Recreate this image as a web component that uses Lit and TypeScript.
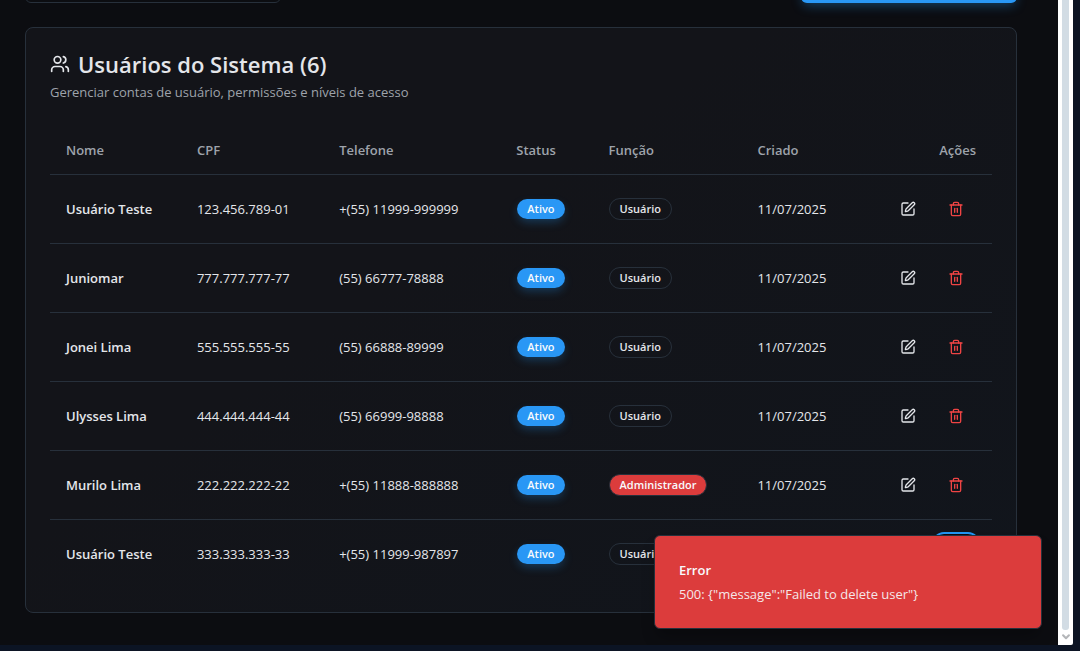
import { LitElement, html, css, svg } from "lit";
import { customElement, property, state } from "lit/decorators.js";
import { classMap } from "lit/directives/class-map.js";

interface User {
  name: string;
  cpf: string;
  phone: string;
  admin?: boolean;
  created: string;
}

const USERS: User[] = [
  { name: "Usuário Teste", cpf: "123.456.789-01", phone: "+(55) 11999-999999", created: "11/07/2025" },
  { name: "Juniomar", cpf: "777.777.777-77", phone: "(55) 66777-78888", created: "11/07/2025" },
  { name: "Jonei Lima", cpf: "555.555.555-55", phone: "(55) 66888-89999", created: "11/07/2025" },
  { name: "Ulysses Lima", cpf: "444.444.444-44", phone: "(55) 66999-98888", created: "11/07/2025" },
  { name: "Murilo Lima", cpf: "222.222.222-22", phone: "+(55) 11888-888888", admin: true, created: "11/07/2025" },
  { name: "Usuário Teste", cpf: "333.333.333-33", phone: "+(55) 11999-987897", created: "11/07/2025" },
];

const ICONS = {
  users: svg`<path d="M16 21v-2a4 4 0 0 0-4-4H6a4 4 0 0 0-4 4v2"/><circle cx="9" cy="7" r="4"/><path d="M22 21v-2a4 4 0 0 0-3-3.87"/><path d="M16 3.13a4 4 0 0 1 0 7.75"/>`,
  edit: svg`<path d="M12 3H5a2 2 0 0 0-2 2v14a2 2 0 0 0 2 2h14a2 2 0 0 0 2-2v-7"/><path d="M18.375 2.625a1 1 0 0 1 3 3l-9.013 9.014a2 2 0 0 1-.853.505l-2.873.84a.5.5 0 0 1-.62-.62l.84-2.873a2 2 0 0 1 .506-.852z"/>`,
  trash: svg`<path d="M3 6h18"/><path d="M19 6v14c0 1-1 2-2 2H7c-1 0-2-1-2-2V6"/><path d="M8 6V4c0-1 1-2 2-2h4c1 0 2 1 2 2v2"/><path d="M10 11v6"/><path d="M14 11v6"/>`,
  down: svg`<path d="m5 8 7 7 7-7"/>`,
};

const icon = (name: keyof typeof ICONS, size: number, width = 2) => html`
  <svg width=${size} height=${size} viewBox="0 0 24 24" fill="none" stroke="currentColor"
    stroke-width=${width} stroke-linecap="round" stroke-linejoin="round" aria-hidden="true">${ICONS[name]}</svg>`;

@customElement("user-table")
export class UserTable extends LitElement {
  static styles = css`
    :host { display: block; }
    table { width: 100%; border-collapse: separate; border-spacing: 0; table-layout: fixed; }
    .c-name { width: 13.9%; }
    .c-cpf { width: 15.1%; }
    .c-phone { width: 18.8%; }
    .c-status { width: 9.8%; }
    .c-role { width: 15.8%; }
    th {
      height: 48px; padding: 0 16px; text-align: left; font-weight: 600;
      color: #9ea3ab; border-bottom: 1px solid #27303b;
    }
    td { padding: 16px; white-space: nowrap; border-bottom: 1px solid #27303b; }
    tbody tr:last-child td { border-bottom: 0; }
    .name { font-weight: 600; }
    .right { text-align: right; }
    .badge {
      display: inline-flex; padding: 2px 10px; border: 1px solid #27303b; border-radius: 11px;
      font-size: 11px; line-height: 16px; font-weight: 600; vertical-align: middle;
    }
    .active {
      background: #2997f5; border-color: transparent; background-clip: padding-box; color: #f8fafc;
      box-shadow: 0 4px 10px -2px rgba(33, 150, 243, 0.3);
    }
    .admin { background: #dc3c3c; color: #f8fafc; }
    .actions { display: flex; justify-content: flex-end; gap: 8px; }
    button {
      display: inline-flex; align-items: center; justify-content: center; width: 40px; height: 36px;
      padding: 0; border: 0; border-radius: 8px; background: transparent; color: #e4e6ea; cursor: pointer;
    }
    .delete { color: #ef4444; }
    .ring { box-shadow: 0 0 0 2px #0c0d11, 0 0 0 4px #2196f3; }
  `;

  @property({ attribute: false }) users: User[] = [];
  @state() private selected = 5;

  render() {
    return html`
      <table>
        <colgroup>
          <col class="c-name" /><col class="c-cpf" /><col class="c-phone" />
          <col class="c-status" /><col class="c-role" /><col /><col />
        </colgroup>
        <thead>
          <tr>
            <th>Nome</th><th>CPF</th><th>Telefone</th><th>Status</th><th>Função</th><th>Criado</th>
            <th class="right">Ações</th>
          </tr>
        </thead>
        <tbody>
          ${this.users.map((u, i) => html`
            <tr>
              <td class="name">${u.name}</td>
              <td>${u.cpf}</td>
              <td>${u.phone}</td>
              <td><span class="badge active">Ativo</span></td>
              <td><span class=${classMap({ badge: true, admin: !!u.admin })}>${u.admin ? "Administrador" : "Usuário"}</span></td>
              <td>${u.created}</td>
              <td>
                <div class="actions">
                  <button type="button" aria-label="Editar">${icon("edit", 16)}</button>
                  <button type="button" aria-label="Excluir"
                    class=${classMap({ delete: true, ring: i === this.selected })}
                    @click=${() => (this.selected = i)}>${icon("trash", 16)}</button>
                </div>
              </td>
            </tr>`)}
        </tbody>
      </table>`;
  }
}

@customElement("app-root")
export class AppRoot extends LitElement {
  static styles = css`
    * { box-sizing: border-box; }
    :host {
      display: flex; box-sizing: border-box; height: 100vh; padding: 0 7px 6px 0; background: #0c1424;
      color: #e4e6ea; font: 13px/20px "Open Sans", "Noto Sans", sans-serif;
    }
    /* The page is scrolled to its end, so content is anchored to the bottom edge. */
    main {
      position: relative; flex: 1; min-width: 0; display: flex; flex-direction: column;
      justify-content: flex-end; gap: 24px; overflow: hidden; padding: 0 41px 32px 25px;
      background: #0c0d11;
    }
    .toolbar { display: flex; justify-content: space-between; flex: none; }
    .search {
      width: 256px; height: 40px; padding: 0 12px; border: 1px solid #27303b; border-radius: 6px;
      background: #0c0d11; color: inherit; font: inherit;
    }
    .add {
      width: 216px; height: 40px; border: 0; border-radius: 6px; background: #2997f5; color: #f8fafc;
      font: inherit; font-weight: 600; box-shadow: 0 4px 12px -2px rgba(33, 150, 243, 0.4);
    }
    .card {
      flex: none; padding: 24px; border: 1px solid #27303b; border-radius: 8px;
      background: linear-gradient(145deg, #131419 40%, #11151c);
    }
    .header { display: flex; flex-direction: column; gap: 6px; margin-bottom: 24px; }
    h2 {
      display: flex; align-items: center; gap: 8px; margin: 0;
      font-size: 22px; line-height: 24px; font-weight: 600;
    }
    p { margin: 0; }
    .muted { color: #9ea3ab; }
    .toast {
      position: absolute; right: 16px; bottom: 16px; width: 388px; max-width: 100%;
      display: flex; flex-direction: column; gap: 4px; padding: 24px;
      border: 1px solid #27303b; border-radius: 6px; background: #dc3c3c; color: #f8fafc;
      box-shadow: 0 10px 15px -3px rgba(0, 0, 0, 0.3);
    }
    .title { font-weight: 600; }
    .message { opacity: 0.9; }
    .scrollbar {
      width: 15px; display: flex; flex-direction: column; align-items: center; gap: 2px;
      padding-bottom: 3px; background: #fff; color: #b4b6b9; border-bottom-right-radius: 2px;
    }
    .thumb { flex: 1; width: 7px; background: #d2dce4; border-radius: 0 0 3px 3px; }
  `;

  render() {
    return html`
      <main>
        <div class="toolbar">
          <input class="search" type="search" aria-label="Buscar" />
          <button class="add" type="button" aria-label="Adicionar"></button>
        </div>
        <section class="card">
          <div class="header">
            <h2>${icon("users", 20)}<span>Usuários do Sistema (${USERS.length})</span></h2>
            <p class="muted">Gerenciar contas de usuário, permissões e níveis de acesso</p>
          </div>
          <user-table .users=${USERS}></user-table>
        </section>
        <div class="toast" role="alert">
          <p class="title">Error</p>
          <p class="message">500: {"message":"Failed to delete user"}</p>
        </div>
      </main>
      <div class="scrollbar" aria-hidden="true">
        <div class="thumb"></div>
        ${icon("down", 10, 5)}
      </div>`;
  }
}
